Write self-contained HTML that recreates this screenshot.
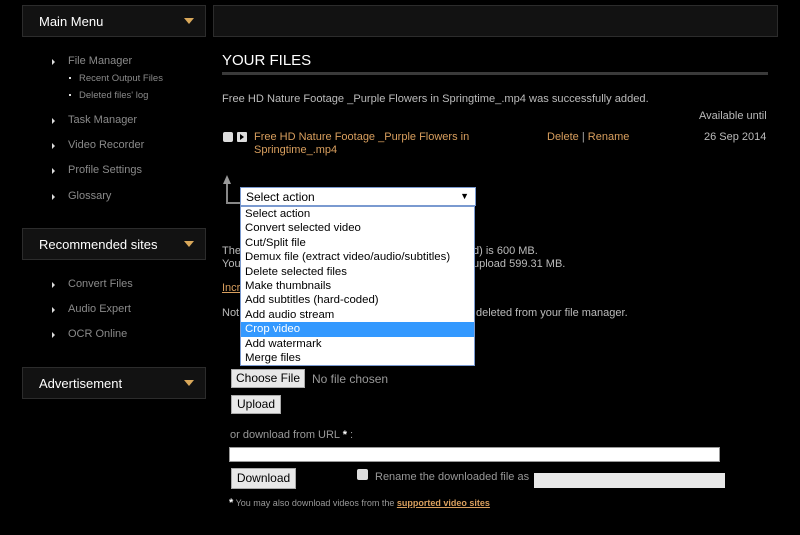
<!DOCTYPE html>
<html><head><style>
*{margin:0;padding:0;box-sizing:border-box}
body{width:800px;height:535px;background:#000;font-family:"Liberation Sans",Arial,sans-serif;position:relative;overflow:hidden;color:#bbb}
.a{position:absolute;white-space:nowrap}
.box{position:absolute;background:#121212;border:1px solid #2c2c2c}
.box .t{position:absolute;left:16px;top:8px;color:#fff;font-size:13px}
.box .tri{position:absolute;right:11px;top:12px;width:0;height:0;border-left:5px solid transparent;border-right:5px solid transparent;border-top:6px solid #d9a85a}
.mi{position:absolute;left:68px;font-size:11px;color:#8a8a8a}
.mi:before{content:"";position:absolute;left:-16px;top:4px;border-top:3px solid transparent;border-bottom:3px solid transparent;border-left:3px solid #ddd}
.si{position:absolute;left:79px;font-size:9.5px;color:#8a8a8a}
.si:before{content:"";position:absolute;left:-10px;top:4px;width:2px;height:2px;background:#ddd}
.o{color:#d99f5e}
.dd{position:absolute;left:240px;top:206px;width:235px;height:160px;background:#fff;border:1px solid #7a9ad0;color:#000;font-size:11.4px}
.dd div{height:14.4px;line-height:14px;padding-left:4px}
.btn{position:absolute;background:#e8e8e8;border:1px solid #aaa;color:#000;font-size:12px;text-align:center;line-height:17px}
</style></head><body>
<div class="box" style="left:22px;top:5px;width:184px;height:32px"><span class="t">Main Menu</span><span class="tri"></span></div>
<div class="box" style="left:213px;top:5px;width:565px;height:32px"></div>
<div class="mi a" style="top:55px">File Manager</div>
<div class="si a" style="top:73px">Recent Output Files</div>
<div class="si a" style="top:90px">Deleted files' log</div>
<div class="mi a" style="top:114px">Task Manager</div>
<div class="mi a" style="top:139px">Video Recorder</div>
<div class="mi a" style="top:164px">Profile Settings</div>
<div class="mi a" style="top:190px">Glossary</div>
<div class="box" style="left:22px;top:228px;width:184px;height:32px"><span class="t">Recommended sites</span><span class="tri"></span></div>
<div class="mi a" style="top:278px">Convert Files</div>
<div class="mi a" style="top:303px">Audio Expert</div>
<div class="mi a" style="top:328px">OCR Online</div>
<div class="box" style="left:22px;top:367px;width:184px;height:32px"><span class="t">Advertisement</span><span class="tri"></span></div>

<div class="a" style="left:222px;top:52px;font-size:15px;color:#fff">YOUR FILES</div>
<div class="a" style="left:222px;top:72px;width:546px;height:3px;background:#3a3a3a"></div>
<div class="a" style="left:222px;top:93px;font-size:11.1px">Free HD Nature Footage _Purple Flowers in Springtime_.mp4 was successfully added.</div>
<div class="a" style="left:699px;top:110px;font-size:11px">Available until</div>
<div class="a" style="left:223px;top:132px;width:10px;height:10px;background:#ddd;border-radius:2px"></div>
<div class="a" style="left:237px;top:132px;width:10px;height:10px;background:#ddd;border-radius:1px"></div>
<div class="a" style="left:240px;top:134px;border-top:3px solid transparent;border-bottom:3px solid transparent;border-left:4px solid #000"></div>
<div class="a o" style="left:254px;top:131px;font-size:11px;line-height:13px">Free HD Nature Footage _Purple Flowers in<br>Springtime_.mp4</div>
<div class="a o" style="left:547px;top:131px;font-size:11px">Delete <span style="color:#aaa">|</span> Rename</div>
<div class="a" style="left:704px;top:131px;font-size:11px">26 Sep 2014</div>
<div class="a" style="left:226px;top:183px;width:2px;height:20px;background:#888"></div>
<div class="a" style="left:226px;top:202px;width:14px;height:2px;background:#888"></div>
<div class="a" style="left:223px;top:175px;border-left:4px solid transparent;border-right:4px solid transparent;border-bottom:9px solid #999"></div>
<div class="a" style="left:240px;top:187px;width:236px;height:19px;background:#fff;border:1px solid #7a9ad0;color:#000;font-size:12px;padding:2px 0 0 5px">Select action<span style="position:absolute;right:6px;top:3px;font-size:9px">▼</span></div>

<div class="a" style="left:222px;top:245px;font-size:11px;line-height:13px">The<br>You</div>
<div class="a" style="left:473px;top:245px;font-size:11px;line-height:13px">d) is 600 MB.<br>upload 599.31 MB.</div>
<div class="a o" style="left:222px;top:282px;font-size:11px;text-decoration:underline">Incr</div>
<div class="a" style="left:222px;top:307px;font-size:11px">Not</div>
<div class="a" style="left:476px;top:307px;font-size:11px">deleted from your file manager.</div>

<div class="dd">
<div>Select action</div><div>Convert selected video</div><div>Cut/Split file</div><div>Demux file (extract video/audio/subtitles)</div><div>Delete selected files</div><div>Make thumbnails</div><div>Add subtitles (hard-coded)</div><div>Add audio stream</div><div style="background:#3399ff;color:#fff">Crop video</div><div>Add watermark</div><div>Merge files</div>
</div>

<div class="btn" style="left:231px;top:369px;width:74px;height:19px">Choose File</div>
<div class="a" style="left:312px;top:372px;font-size:12px;color:#999">No file chosen</div>
<div class="btn" style="left:231px;top:395px;width:50px;height:19px">Upload</div>
<div class="a" style="left:230px;top:429px;font-size:11px;color:#999">or download from URL <b style="color:#fff">*</b> :</div>
<div class="a" style="left:229px;top:447px;width:491px;height:15px;background:#fff;border:1px solid #999"></div>
<div class="btn" style="left:231px;top:468px;width:65px;height:21px;line-height:19px">Download</div>
<div class="a" style="left:357px;top:469px;width:11px;height:11px;background:#ddd;border-radius:2px"></div>
<div class="a" style="left:375px;top:471px;font-size:11px;color:#999">Rename the downloaded file as</div>
<div class="a" style="left:534px;top:473px;width:191px;height:15px;background:#e8e8e8"></div>
<div class="a" style="left:229px;top:497px;font-size:9px;color:#999"><b style="color:#fff;font-size:11px">*</b> You may also download videos from the <span class="o" style="text-decoration:underline;font-weight:bold">supported video sites</span></div>
</body></html>
